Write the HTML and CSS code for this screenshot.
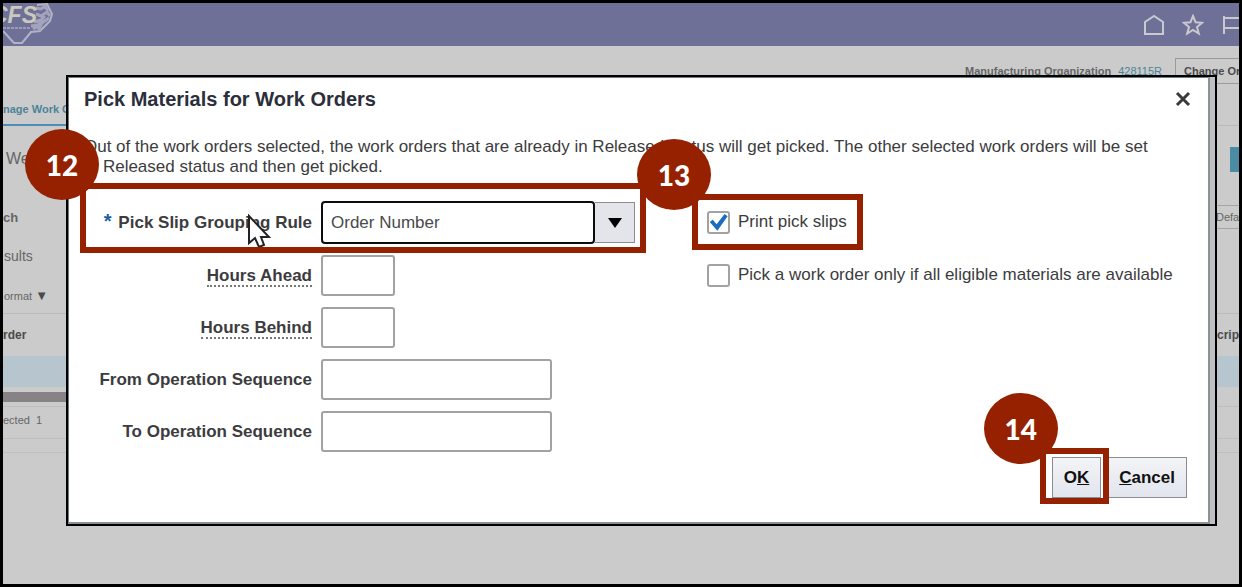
FILE: index.html
```html
<!DOCTYPE html>
<html lang="en">
<head>
    <meta charset="UTF-8">
    <meta name="viewport" content="width=device-width, initial-scale=1.0">
    <title>Pick Materials for Work Orders</title>
    <link rel="stylesheet" href="styles.css">
</head>
<body>
    <div class="page">
        <header class="topbar">
            <svg class="logo" viewBox="0 0 52 43" aria-hidden="true">
                <path d="M0 28 L11 40 H19 L28 29 L37 28 L47 18 L49 11 L44 1 L34 2" fill="none" stroke="#b3b3c8" stroke-width="2"/>
                <path d="M33 5 l5 1 l4 -3 l3 5 M33 11 l5 2 l6 -4 l3 4 M42 13 l-4 4 l-7 2 M46 15 l-7 5 l-3 6 M28 23 l7 -1 l6 -5 M30 26 l4 -2 l4 3" fill="none" stroke="#a3a3bd" stroke-width="3"/>
                <text x="-12" y="20" class="logo-text">CFS</text>
                <path d="M0 25 h27" stroke="#9c9cb6" stroke-width="2" stroke-dasharray="3 1"/>
            </svg>
            <nav class="topbar-icons">
                <a href="#" aria-label="Home"><svg width="22" height="22" viewBox="0 0 22 22"><path d="M2 8 L11 2 L20 8 V20 H2 Z"/></svg></a>
                <a href="#" aria-label="Favorites"><svg width="22" height="22" viewBox="0 0 22 22"><path d="M11 2 L13.600 8.300 L20 8.800 L15 13 L16.800 19.500 L11 16 L5.200 19.500 L7 13 L2 8.800 L8.400 8.300 Z"/></svg></a>
                <a href="#" aria-label="Watchlist"><svg width="18" height="22" viewBox="0 0 18 22"><path d="M3 2 V20 M3 4 H18 M3 14 H18"/></svg></a>
            </nav>
        </header>

        <main class="background">
            <div class="org-row">
                <b>Manufacturing Organization</b>
                <a href="#">428115R</a>
                <button class="org-btn">Change Or</button>
            </div>
            <div class="bg-row tab-row"><a href="#" class="tab">nage Work O</a><span class="rule"></span></div>
            <div class="bg-row title-row"><span>We</span><span class="teal"></span></div>
            <div class="bg-row search-row"><b>ch</b><span class="default-box">Defa</span></div>
            <div class="bg-row results-row"><span>sults</span></div>
            <div class="bg-row format-row"><span>ormat <small>▼</small></span></div>
            <div class="bg-row head-row"><b>rder</b><b class="right-head">crip</b></div>
            <div class="bg-row selected-row"></div>
            <div class="scrollbar"></div>
            <div class="bg-row count-row"><span>ected&nbsp; 1</span></div>
            <div class="bg-row end-row"></div>
        </main>

        <div class="dialog" role="dialog" aria-labelledby="dialogTitle">
            <div class="dialog-header">
                <h1 id="dialogTitle">Pick Materials for Work Orders</h1>
                <button class="close" aria-label="Close"><svg width="16" height="16" viewBox="0 0 16 16"><path d="M2 2 L14 14 M14 2 L2 14"/></svg></button>
            </div>

            <p class="message">Out of the work orders selected, the work orders that are already in Released status will get picked. The other selected work orders will be set to Released status and then get picked.</p>

            <form class="form">
                <div class="fields">
                    <div class="field marked">
                        <label for="groupingRule"><span class="required">*</span> Pick Slip Grouping Rule</label>
                        <div class="combo">
                            <select id="groupingRule">
                                <option>Order Number</option>
                            </select>
                            <span class="combo-arrow"><svg width="14" height="10" viewBox="0 0 14 10"><path d="M0 0 H14 L7 10 Z"/></svg></span>
                        </div>
                        <svg class="cursor" width="24" height="34" viewBox="0 0 24 34" aria-hidden="true"><path d="M2 2 V29 L8 24 L12 33 L17 31 L14 23 H22 Z"/></svg>
                        <span class="highlight highlight-rule"></span>
                        <span class="step step-rule">12</span>
                    </div>
                    <div class="field">
                        <label for="hoursAhead"><span class="hint">Hours Ahead</span></label>
                        <input type="text" id="hoursAhead" class="short">
                    </div>
                    <div class="field">
                        <label for="hoursBehind"><span class="hint">Hours Behind</span></label>
                        <input type="text" id="hoursBehind" class="short">
                    </div>
                    <div class="field">
                        <label for="fromSequence">From Operation Sequence</label>
                        <input type="text" id="fromSequence">
                    </div>
                    <div class="field">
                        <label for="toSequence">To Operation Sequence</label>
                        <input type="text" id="toSequence">
                    </div>
                </div>

                <div class="options">
                    <div class="option marked">
                        <input type="checkbox" id="printSlips" checked>
                        <label for="printSlips">Print pick slips</label>
                        <span class="highlight highlight-print"></span>
                        <span class="step step-print">13</span>
                    </div>
                    <div class="option">
                        <input type="checkbox" id="onlyAvailable">
                        <label for="onlyAvailable">Pick a work order only if all eligible materials are available</label>
                    </div>
                </div>
            </form>

            <div class="actions">
                <div class="marked">
                    <button class="btn">O<u>K</u></button>
                    <span class="highlight highlight-ok"></span>
                    <span class="step step-ok">14</span>
                </div>
                <button class="btn"><u>C</u>ancel</button>
            </div>
        </div>
    </div>
</body>
</html>
```
FILE: styles.css
```css
* {
    box-sizing: border-box;
}
body {
    margin: 0;
    font-family: "Liberation Sans", Arial, sans-serif;
    font-size: 17px;
    color: #3c3c3e;
}
button, input, select {
    font-family: inherit;
    font-size: inherit;
}
.page {
    position: relative;
    min-height: 100vh;
    border: 3px solid #000;
    background: #cbcbcb;
    overflow: hidden;
}

/* application behind the dialog */
.topbar {
    display: flex;
    justify-content: space-between;
    height: 43px;
    background: #6f7097;
}
.logo {
    width: 52px;
    height: 43px;
}
.logo-text {
    font: italic bold 23px "Liberation Sans", Arial, sans-serif;
    fill: #cbc9bd;
}
.topbar-icons {
    display: flex;
    align-items: center;
    gap: 17px;
}
.topbar-icons a {
    display: flex;
}
.topbar-icons path {
    fill: none;
    stroke: #c9c9cf;
    stroke-width: 2;
}
.background {
    font-size: 11px;
    color: #666;
}
.org-row {
    display: flex;
    justify-content: flex-end;
    align-items: center;
    gap: 7px;
    height: 49px;
}
.org-row a, .tab {
    color: #4b8499;
    text-decoration: none;
}
.org-btn {
    width: 64px;
    height: 26px;
    margin-left: 6px;
    padding: 0 0 0 8px;
    border: 1px solid #9a9a9a;
    border-right: none;
    background: none;
    color: #4a4a4a;
    font-weight: bold;
    text-align: left;
    white-space: nowrap;
    overflow: hidden;
}
.bg-row {
    display: flex;
    justify-content: space-between;
    align-items: center;
}
.tab-row {
    align-items: flex-end;
    height: 31px;
}
.tab {
    width: 66px;
    padding-bottom: 9px;
    border-bottom: 2px solid #4c8db5;
    font-weight: bold;
    white-space: nowrap;
}
.rule {
    width: 22px;
    border-bottom: 1px solid #bababa;
}
.title-row {
    height: 66px;
    padding-left: 3px;
    font-size: 16px;
}
.teal {
    width: 9px;
    height: 25px;
    background: #4b8ba3;
}
.search-row {
    height: 50px;
    font-size: 13px;
}
.default-box {
    width: 23px;
    padding: 5px 0;
    border: 1px solid #a5a5a5;
    border-width: 1px 0;
    font-size: 11px;
}
.results-row {
    height: 28px;
    padding-left: 1px;
    font-size: 14px;
}
.format-row {
    height: 44px;
    padding: 8px 0 0 1px;
    border-bottom: 1px solid #bababa;
}
.format-row small {
    font-size: 13px;
    line-height: 11px;
    color: #4a4a4a;
}
.head-row {
    height: 42px;
    color: #4a4a4a;
    font-size: 12px;
}
.right-head {
    width: 22px;
}
.selected-row {
    height: 31px;
    background: #b7c6ce;
}
.scrollbar {
    width: 66px;
    height: 10px;
    margin: 5px 0 4px;
    background: #868285;
}
.count-row {
    height: 33px;
    padding-bottom: 5px;
    border: 1px solid #bebebe;
    border-width: 1px 0;
}
.end-row {
    height: 14px;
    border-bottom: 1px solid #bebebe;
}

/* dialog */
.dialog {
    position: absolute;
    top: 72px;
    left: 63px;
    right: 22px;
    padding: 10px 28px 26px 16px;
    border: 2px solid #000;
    background: #fff;
    box-shadow: inset -5px 0 #bfc0c3, inset -7px -2px #8b9295, inset 1px 1px #6d7a80;
}
.dialog-header {
    display: flex;
    justify-content: space-between;
    align-items: center;
}
h1 {
    margin: 0;
    font-size: 20px;
    line-height: 24px;
    color: #2b2e3b;
}
.close {
    display: flex;
    margin-right: -4px;
    padding: 0;
    border: none;
    background: none;
    cursor: pointer;
}
.close path {
    stroke: #3a3a3a;
    stroke-width: 3;
}
.message {
    margin: 26px 0 24px;
    padding-right: 24px;
    line-height: 20px;
}
.form {
    display: flex;
    gap: 72px;
}
.fields, .options {
    display: flex;
    flex-direction: column;
    gap: 11px;
}
.field {
    display: flex;
    align-items: center;
    gap: 9px;
}
.field label {
    width: 228px;
    text-align: right;
    font-weight: bold;
    white-space: nowrap;
}
.required {
    margin-right: 2px;
    color: #1c5f9c;
    font-size: 20px;
    line-height: 17px;
}
.hint {
    border-bottom: 2px dotted #777;
}
.field input {
    width: 231px;
    height: 41px;
    border: 2px solid #a2a2a2;
    border-radius: 3px;
    background: #fff;
}
.field .short {
    width: 74px;
}
.combo {
    display: flex;
    align-items: center;
}
select {
    appearance: none;
    width: 274px;
    height: 43px;
    padding: 0 8px;
    border: 2px solid #0c0c0c;
    border-radius: 4px;
    background: #fff;
    color: #4a4a4c;
}
.combo-arrow {
    display: flex;
    align-items: center;
    justify-content: center;
    width: 40px;
    height: 41px;
    border: 1px solid #8c8c90;
    border-left: none;
    background: #e4e5ea;
}
.option {
    display: flex;
    align-items: center;
    gap: 8px;
    height: 42px;
}
.option input {
    appearance: none;
    width: 23px;
    height: 23px;
    margin: 0;
    border: 2px solid #a2a2a2;
    border-radius: 3px;
    background: #fff;
}
.option input:checked::before {
    content: "";
    display: block;
    width: 19px;
    height: 19px;
    background: #1a6cc0;
    clip-path: polygon(4% 50%, 20% 38%, 40% 62%, 82% 8%, 98% 20%, 44% 96%);
}
.actions {
    display: flex;
    justify-content: flex-end;
    gap: 6px;
    margin-top: 5px;
}
.btn {
    display: block;
    height: 41px;
    padding: 0 11px;
    border: 1px solid #8a8c92;
    background: linear-gradient(#f3f4f6, #e3e5ee);
    color: #111;
    font-weight: bold;
    cursor: pointer;
}

/* numbered step markers */
.marked {
    position: relative;
}
.highlight {
    position: absolute;
    border: 6px solid #962100;
    pointer-events: none;
}
.highlight-rule {
    inset: -18px -11px -9px -4px;
}
.highlight-print {
    inset: -7px auto -7px -15px;
    width: 171px;
}
.highlight-ok {
    inset: -9px -8px -6px -12px;
}
.step {
    position: absolute;
    display: flex;
    align-items: center;
    justify-content: center;
    width: 74px;
    height: 71px;
    border-radius: 50%;
    background: #962100;
    color: #fff;
    font-family: Lato, sans-serif;
    font-size: 28px;
    font-weight: 900;
}
.step-rule {
    top: -72px;
    left: -59px;
}
.step-print {
    top: -62px;
    left: -70px;
}
.step-ok {
    top: -64px;
    left: -68px;
}
.cursor {
    position: absolute;
    top: 13px;
    left: 163px;
}
.cursor path {
    fill: #fff;
    stroke: #222;
    stroke-width: 2;
}
```
